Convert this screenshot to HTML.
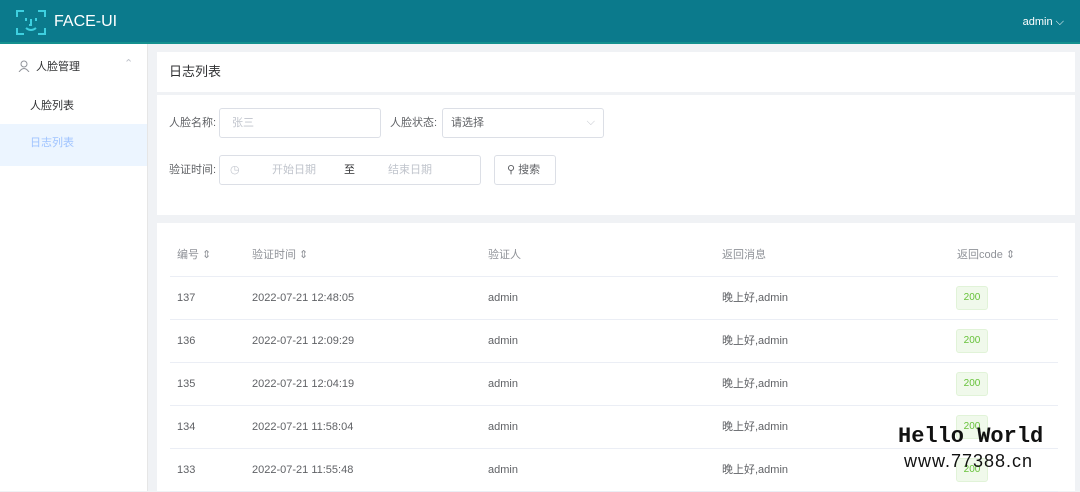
<!DOCTYPE html><html><head><meta charset="utf-8"><style>
*{box-sizing:border-box;margin:0;padding:0}
body{width:1080px;height:491px;overflow:hidden;font-family:"Liberation Sans","Noto Sans CJK SC",sans-serif;font-size:11px;line-height:13px;color:#606266;background:#f0f2f5;position:relative}
.hd{position:absolute;left:0;top:0;width:1080px;height:44px;background:#0b7a8c;border-bottom:2px solid #14908f}
.hd .t{position:absolute;left:54px;top:13px;color:#fff;font-size:16px;line-height:18px}
.hd .u{position:absolute;right:16px;top:16px;color:#fff;font-size:11px}
.sb{position:absolute;left:0;top:44px;width:148px;height:447px;background:#fff;border-right:1px solid #e6e6e6}
.a{position:absolute}
.card{position:absolute;background:#fff;left:157px;width:918px}
.inp{position:absolute;border:1px solid #dcdfe6;border-radius:3px;background:#fff;height:30px}
.ph{color:#c0c4cc}
.row{position:absolute;left:170px;width:888px;height:43px;border-bottom:1px solid #ebeef5}
.row span{position:absolute;top:15px;line-height:13px}
.tag{position:absolute;left:786px;top:9px;width:32px;height:24px;background:#f0f9eb;border:1px solid #e1f3d8;color:#67c23a;font-size:10px;text-align:center;line-height:22px;border-radius:3px}
</style></head><body>
<div class="hd">
<svg class="a" style="left:16px;top:9px" width="30" height="27" viewBox="0 0 30 27" fill="none" stroke="#3ed0e0" stroke-width="2"><path d="M1 8V2h7M22 2h7v6M1 19v6h7M22 25h7v-6M10 9v3M20 9v3M15 10v6h-2M10 19q5 4 10 0"/></svg>
<div class="t">FACE-UI</div><div class="u">admin ⌵</div></div>
<div class="sb">
<svg class="a" style="left:18px;top:16px" width="12" height="12" viewBox="0 0 12 12" fill="none" stroke="#909399"><circle cx="6" cy="4" r="3"/><path d="M1 12q5-7 10 0"/></svg>
<div class="a" style="left:36px;top:17px;color:#303133">人脸管理</div>
<div class="a" style="left:124px;top:14px;color:#c0c4cc">⌃</div>
<div class="a" style="left:30px;top:56px;color:#303133">人脸列表</div>
<div class="a" style="left:0;top:80px;width:147px;height:42px;background:#ecf5ff"></div>
<div class="a" style="left:30px;top:93px;color:#a0c4ff">日志列表</div>
</div>
<div class="card" style="top:52px;height:40px"><div class="a" style="left:12px;top:13px;font-size:13px;color:#303133">日志列表</div></div>
<div class="card" style="top:95px;height:120px">
<div class="a" style="left:12px;top:22px">人脸名称:</div>
<div class="inp" style="left:62px;top:13px;width:162px"><span class="a ph" style="left:12px;top:8px">张三</span></div>
<div class="a" style="left:233px;top:22px">人脸状态:</div>
<div class="inp" style="left:285px;top:13px;width:162px"><span class="a" style="left:8px;top:8px">请选择</span><span class="a ph" style="right:8px;top:7px">⌵</span></div>
<div class="a" style="left:12px;top:69px">验证时间:</div>
<div class="inp" style="left:62px;top:60px;width:262px"><span class="a ph" style="left:10px;top:8px">◷</span><span class="a ph" style="left:52px;top:8px">开始日期</span><span class="a" style="left:124px;top:8px;color:#303133">至</span><span class="a ph" style="left:168px;top:8px">结束日期</span></div>
<div class="inp" style="left:337px;top:60px;width:62px"><span class="a" style="left:12px;top:8px">⚲ 搜索</span></div>
</div>
<div class="card" style="top:223px;height:268px"></div>
<div class="row" style="top:234px;color:#909399"><span style="left:7px">编号 ⇕</span><span style="left:82px">验证时间 ⇕</span><span style="left:318px">验证人</span><span style="left:552px">返回消息</span><span style="left:787px">返回code ⇕</span></div>
<div class="row" style="top:277px"><span style="left:7px">137</span><span style="left:82px">2022-07-21 12:48:05</span><span style="left:318px">admin</span><span style="left:552px">晚上好,admin</span><div class="tag">200</div></div>
<div class="row" style="top:320px"><span style="left:7px">136</span><span style="left:82px">2022-07-21 12:09:29</span><span style="left:318px">admin</span><span style="left:552px">晚上好,admin</span><div class="tag">200</div></div>
<div class="row" style="top:363px"><span style="left:7px">135</span><span style="left:82px">2022-07-21 12:04:19</span><span style="left:318px">admin</span><span style="left:552px">晚上好,admin</span><div class="tag">200</div></div>
<div class="row" style="top:406px"><span style="left:7px">134</span><span style="left:82px">2022-07-21 11:58:04</span><span style="left:318px">admin</span><span style="left:552px">晚上好,admin</span><div class="tag">200</div></div>
<div class="row" style="top:449px"><span style="left:7px">133</span><span style="left:82px">2022-07-21 11:55:48</span><span style="left:318px">admin</span><span style="left:552px">晚上好,admin</span><div class="tag">200</div></div>
<div class="a" style="left:898px;top:425px;font:bold 22px/24px 'Liberation Mono',monospace;color:#111">Hello World</div>
<div class="a" style="left:904px;top:451px;font-size:18px;line-height:20px;letter-spacing:1px;color:#111">www.77388.cn</div>
</body></html>
